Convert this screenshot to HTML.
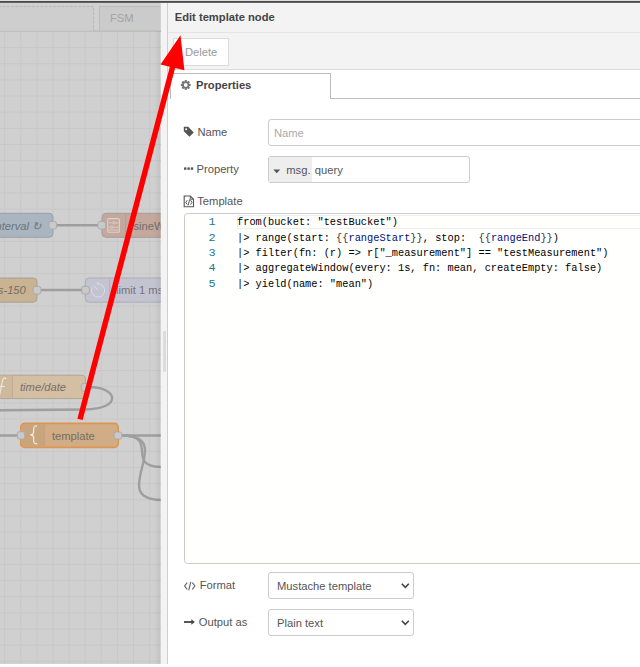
<!DOCTYPE html>
<html><head><meta charset="utf-8">
<style>
html,body{margin:0;padding:0;width:640px;height:667px;overflow:hidden;background:#fff;}
body{position:relative;font-family:"Liberation Sans",sans-serif;font-size:11.2px;}
.a{position:absolute;}
.t{position:absolute;line-height:11.2px;white-space:pre;}
#topline{left:0;top:0;width:640px;height:3px;background:linear-gradient(#e0e0e0 0,#e0e0e0 1px,#444 1px,#4c4c4c 2px,#7a7a7a 3px);}
#strip{left:161px;top:3px;width:6px;height:661px;background:#f3f3f3;}
#stripline{left:167px;top:3px;width:1px;height:661px;background:#cfcfcf;}
#handle{left:163px;top:331px;width:3px;height:41px;background:#dcdcdc;border-radius:1px;}
#panel{left:168px;top:3px;width:472px;height:661px;background:#fff;}
#hdr{left:168px;top:3px;width:472px;height:29px;background:#f3f3f3;border-bottom:1px solid #e4e4e4;}
#tb{left:168px;top:33px;width:472px;height:36px;background:#f3f3f3;border-bottom:1px solid #dddddd;}
.btn{background:#fff;border:1px solid #dcdcdc;box-sizing:border-box;}
.lbl{color:#555;}
.inp{background:#fff;border:1px solid #cccccc;border-radius:3px;box-sizing:border-box;}
.code{font-family:"Liberation Mono",monospace;font-size:11.8px;line-height:15.35px;white-space:pre;color:#000;}
</style></head><body>
<!-- canvas -->
<svg class="a" style="left:0;top:0" width="640" height="667" viewBox="0 0 640 667">
  <defs>
    <clipPath id="cv"><rect x="0" y="3" width="160.6" height="661"/></clipPath>
  </defs>
  <g clip-path="url(#cv)">
    <rect x="0" y="3" width="161" height="661" fill="#d0d0d0"/>
    <g id="grid" stroke="#c8c8c8" stroke-width="1"><line x1="4.60" y1="31" x2="4.60" y2="664"/><line x1="20.72" y1="31" x2="20.72" y2="664"/><line x1="36.84" y1="31" x2="36.84" y2="664"/><line x1="52.96" y1="31" x2="52.96" y2="664"/><line x1="69.08" y1="31" x2="69.08" y2="664"/><line x1="85.20" y1="31" x2="85.20" y2="664"/><line x1="101.32" y1="31" x2="101.32" y2="664"/><line x1="117.44" y1="31" x2="117.44" y2="664"/><line x1="133.56" y1="31" x2="133.56" y2="664"/><line x1="149.68" y1="31" x2="149.68" y2="664"/><line x1="0" y1="47.60" x2="161" y2="47.60"/><line x1="0" y1="63.75" x2="161" y2="63.75"/><line x1="0" y1="79.90" x2="161" y2="79.90"/><line x1="0" y1="96.05" x2="161" y2="96.05"/><line x1="0" y1="112.20" x2="161" y2="112.20"/><line x1="0" y1="128.35" x2="161" y2="128.35"/><line x1="0" y1="144.50" x2="161" y2="144.50"/><line x1="0" y1="160.65" x2="161" y2="160.65"/><line x1="0" y1="176.80" x2="161" y2="176.80"/><line x1="0" y1="192.95" x2="161" y2="192.95"/><line x1="0" y1="209.10" x2="161" y2="209.10"/><line x1="0" y1="225.25" x2="161" y2="225.25"/><line x1="0" y1="241.40" x2="161" y2="241.40"/><line x1="0" y1="257.55" x2="161" y2="257.55"/><line x1="0" y1="273.70" x2="161" y2="273.70"/><line x1="0" y1="289.85" x2="161" y2="289.85"/><line x1="0" y1="306.00" x2="161" y2="306.00"/><line x1="0" y1="322.15" x2="161" y2="322.15"/><line x1="0" y1="338.30" x2="161" y2="338.30"/><line x1="0" y1="354.45" x2="161" y2="354.45"/><line x1="0" y1="370.60" x2="161" y2="370.60"/><line x1="0" y1="386.75" x2="161" y2="386.75"/><line x1="0" y1="402.90" x2="161" y2="402.90"/><line x1="0" y1="419.05" x2="161" y2="419.05"/><line x1="0" y1="435.20" x2="161" y2="435.20"/><line x1="0" y1="451.35" x2="161" y2="451.35"/><line x1="0" y1="467.50" x2="161" y2="467.50"/><line x1="0" y1="483.65" x2="161" y2="483.65"/><line x1="0" y1="499.80" x2="161" y2="499.80"/><line x1="0" y1="515.95" x2="161" y2="515.95"/><line x1="0" y1="532.10" x2="161" y2="532.10"/><line x1="0" y1="548.25" x2="161" y2="548.25"/><line x1="0" y1="564.40" x2="161" y2="564.40"/><line x1="0" y1="580.55" x2="161" y2="580.55"/><line x1="0" y1="596.70" x2="161" y2="596.70"/><line x1="0" y1="612.85" x2="161" y2="612.85"/><line x1="0" y1="629.00" x2="161" y2="629.00"/><line x1="0" y1="645.15" x2="161" y2="645.15"/><line x1="0" y1="661.30" x2="161" y2="661.30"/></g>
    <!-- tab bar -->
    <rect x="0" y="3" width="161" height="28.5" fill="#d0d0d0"/>
    <line x1="0" y1="31" x2="161" y2="31" stroke="#bdbdbd" stroke-width="1"/>
    <rect x="-10" y="6.5" width="104" height="24.5" fill="#cecece"/><path d="M-10 6.5 H93.5 V31" fill="none" stroke="#b9b9b9" stroke-dasharray="3 1.2"/>
    <rect x="99.5" y="6.5" width="100" height="24.5" fill="#cbcbcb" stroke="#bcbcbc"/>
    <text x="110" y="22.3" font-family="Liberation Sans" font-size="11.2" fill="#a4a4a4">FSM</text>
    <line x1="0" y1="31.3" x2="161" y2="31.3" stroke="#bdbdbd" stroke-width="1"/>

    <!-- wires -->
    <g fill="none" stroke="#9e9e9e" stroke-width="2.4">
      <line x1="57" y1="225.3" x2="98" y2="225.3"/>
      <line x1="41" y1="290" x2="82" y2="290"/>
      <path d="M89 387 C 118 387, 123 409, 85 409.5 L -10 410.3"/>
      <line x1="-5" y1="435.5" x2="18" y2="435.5"/>
      <line x1="122" y1="435.5" x2="165" y2="435.5"/>
      <path d="M122 435.5 C 160.2 435.5, 123.8 467, 162 467"/>
      <path d="M122 435.5 C 179 435.5, 105 500, 162 500"/>
    </g>

    <!-- inject node -->
    <rect x="-30" y="213.3" width="83" height="24" rx="4" fill="#a9b5c0" stroke="#9aa1a8" stroke-width="1"/>
    <text x="-7" y="230" font-family="Liberation Sans" font-style="italic" font-size="11.2" fill="#6c747b">interval ↻</text>
    <rect x="48.90" y="221.40" width="7.70" height="7.70" rx="2.2" fill="#c9c9c9" stroke="#a8a8a8" stroke-width="0.9"/>

    <!-- sine node -->
    <rect x="102" y="213.3" width="90" height="24" rx="4" fill="#c2a89d" stroke="#ab9c95" stroke-width="1"/>
    <line x1="125.6" y1="213.5" x2="125.6" y2="237" stroke="#b59f95" stroke-width="1"/>
    <rect x="107.8" y="218.6" width="11.6" height="13.6" rx="1" fill="none" stroke="#ddd2cc" stroke-width="1.1"/>
    <g stroke="#ddd2cc" stroke-width="0.9" fill="none"><path d="M109 222.8 H112.5 M115.5 222.8 H118.5 M109 227.2 H110.2 M113.2 227.2 H118.5 M109 230 H118.5"/><circle cx="114" cy="222.8" r="1.2"/><circle cx="111.7" cy="227.2" r="1.2"/></g>
    <text x="133.5" y="229.8" font-family="Liberation Sans" font-size="11.2" fill="#766c67">sineWave</text>
    <rect x="97.90" y="221.40" width="7.70" height="7.70" rx="2.2" fill="#c9c9c9" stroke="#a8a8a8" stroke-width="0.9"/>

    <!-- s-150 node -->
    <rect x="-40" y="278" width="77" height="24.2" rx="4" fill="#c9b393" stroke="#aaa194" stroke-width="1"/>
    <text x="-11.5" y="294" font-family="Liberation Sans" font-style="italic" font-size="11.2" fill="#746d62">ms-150</text>
    <rect x="33.15" y="286.40" width="7.70" height="7.70" rx="2.2" fill="#c9c9c9" stroke="#a8a8a8" stroke-width="0.9"/>

    <!-- limit node -->
    <rect x="85.25" y="278" width="110" height="24.2" rx="4" fill="#c4c3d0" stroke="#acabb5" stroke-width="1"/>
    <line x1="109.6" y1="278.5" x2="109.6" y2="302" stroke="#b5b3c0" stroke-width="1"/>
    <path d="M98 283.9 A 6.6 6.6 0 1 1 92.3 287.2 M93.6 285.6 L97.9 290.2" fill="none" stroke="#dddce4" stroke-width="1"/>
    <circle cx="97.7" cy="283.3" r="1" fill="#dddce4"/>
    <text x="116" y="294" font-family="Liberation Sans" font-size="11.2" fill="#74737d">limit 1 msg/s</text>
    <rect x="81.65" y="286.40" width="7.70" height="7.70" rx="2.2" fill="#c9c9c9" stroke="#a8a8a8" stroke-width="0.9"/>

    <!-- time/date node -->
    <rect x="-40" y="375.2" width="125.6" height="23.4" rx="4" fill="#d4bfa4" stroke="#aea596" stroke-width="1"/>
    <rect x="-39.5" y="375.7" width="52" height="22.4" fill="#cfb99d"/>
    <line x1="12.5" y1="375.7" x2="12.5" y2="398.1" stroke="#c2ad92" stroke-width="1"/>
    <path d="M6.3 378.8 C 4.8 377.6, 3 378, 2.4 381 L -0.6 396 M -0.8 386.5 H 4.8" fill="none" stroke="#eee6dc" stroke-width="1.2"/>
    <text x="20" y="390.6" font-family="Liberation Sans" font-style="italic" font-size="11.2" fill="#766f65">time/date</text>
    <rect x="81.40" y="383.40" width="7.70" height="7.70" rx="2.2" fill="#c9c9c9" stroke="#a8a8a8" stroke-width="0.9"/>

    <!-- template node -->
    <rect x="20.75" y="423.4" width="97.5" height="24" rx="4" fill="#d0ad86" stroke="#df9550" stroke-width="1.6"/>
    <path d="M44.4 424.2 H24.5 a3.5 3.5 0 0 0 -3 3 V443.6 a3.5 3.5 0 0 0 3 3 H44.4 Z" fill="#c8a57d"/>
    <line x1="44.4" y1="424.3" x2="44.4" y2="446.7" stroke="#bf9c76" stroke-width="1" stroke-dasharray="1.5 1"/>
    <path d="M37.2 425.8 C 34 425.8, 33.6 427, 33.6 429.5 V 432.3 C 33.6 434, 32.8 434.8, 30.2 434.8 C 32.8 434.8, 33.6 435.6, 33.6 437.3 V 440.2 C 33.6 442.6, 34 443.8, 37.2 443.8" fill="none" stroke="#f1e9e0" stroke-width="1.3"/>
    <text x="51.9" y="439.5" font-family="Liberation Sans" font-size="11.2" fill="#776d60">template</text>
    <rect x="17.30" y="431.65" width="7.50" height="7.50" rx="2.2" fill="#c9c9c9" stroke="#a8a8a8" stroke-width="0.9"/>
    <rect x="114.10" y="431.90" width="7.70" height="7.20" rx="2.2" fill="#c9c9c9" stroke="#a8a8a8" stroke-width="0.9"/>
  </g>
</svg>

<div class="a" style="left:154px;top:31px;width:6.6px;height:633px;background:linear-gradient(90deg,rgba(0,0,0,0),rgba(0,0,0,0.07));"></div>
<div class="a" id="topline"></div>
<div class="a" id="strip"></div>
<div class="a" id="handle"></div>
<div class="a" id="stripline"></div>
<div class="a" id="panel"></div>
<div class="a" id="hdr"></div>
<div class="t" style="left:174.7px;top:11.5px;font-weight:bold;color:#444;">Edit template node</div>
<div class="a" id="tb"></div>
<div class="a btn" style="left:173px;top:38px;width:56px;height:27.8px;"></div>
<div class="t" style="left:185px;top:46.5px;color:#999;">Delete</div>

<!-- tabs -->
<div class="a" style="left:170px;top:73px;width:161px;height:26px;border:1px solid #bbb;border-bottom:none;box-sizing:border-box;background:#fff"></div>
<div class="a" style="left:331px;top:98px;width:309px;height:1px;background:#bbb"></div>
<div class="t" style="left:196px;top:79.9px;font-weight:bold;color:#444;">Properties</div>


<!-- gear icon -->
<svg class="a" style="left:180px;top:79.4px" width="12" height="12" viewBox="0 0 12 12">
  <g transform="translate(5.75,6)" fill="#747474">
    <circle r="3.6"/><rect x="-1.1" y="-4.9" width="2.2" height="2.8" transform="rotate(0)"/><rect x="-1.1" y="-4.9" width="2.2" height="2.8" transform="rotate(45)"/><rect x="-1.1" y="-4.9" width="2.2" height="2.8" transform="rotate(90)"/><rect x="-1.1" y="-4.9" width="2.2" height="2.8" transform="rotate(135)"/><rect x="-1.1" y="-4.9" width="2.2" height="2.8" transform="rotate(180)"/><rect x="-1.1" y="-4.9" width="2.2" height="2.8" transform="rotate(225)"/><rect x="-1.1" y="-4.9" width="2.2" height="2.8" transform="rotate(270)"/><rect x="-1.1" y="-4.9" width="2.2" height="2.8" transform="rotate(315)"/>
  </g>
  <circle cx="5.75" cy="6" r="1.9" fill="#fff"/>
</svg>

<!-- Name row -->
<svg class="a" style="left:183px;top:126px" width="12" height="12" viewBox="0 0 12 12">
  <path d="M0.8 0.8 H5.2 L10.8 6.4 L6.4 10.8 L0.8 5.2 Z" fill="#555"/>
  <circle cx="3.2" cy="3.2" r="1" fill="#fff"/>
</svg>
<div class="t lbl" style="left:197.5px;top:127.1px;">Name</div>
<div class="a inp" style="left:268px;top:118.8px;width:400px;height:27px;"></div>
<div class="t" style="left:274px;top:127.8px;color:#aaa;">Name</div>

<!-- Property row -->
<svg class="a" style="left:183px;top:164px" width="12" height="10" viewBox="0 0 12 10">
  <rect x="1" y="3.4" width="2.4" height="2.4" fill="#555"/>
  <rect x="4.4" y="3.4" width="2.4" height="2.4" fill="#555"/>
  <rect x="7.8" y="3.4" width="2.4" height="2.4" fill="#555"/>
</svg>
<div class="t lbl" style="left:196.5px;top:163.5px;">Property</div>
<div class="a inp" style="left:268px;top:156.3px;width:201.5px;height:27px;overflow:hidden;">
  <div class="a" style="left:0;top:0;width:42.6px;height:25px;background:#eeeeee;"></div>
</div>
<svg class="a" style="left:273px;top:168.5px" width="8" height="5" viewBox="0 0 8 5"><path d="M0.3 0.5 H7.2 L3.75 4.2 Z" fill="#555"/></svg>
<div class="t" style="left:286.3px;top:164.5px;color:#555;">msg.</div>
<div class="t" style="left:314.8px;top:164.5px;color:#555;">query</div>

<!-- Template row -->
<svg class="a" style="left:183px;top:195px" width="12" height="13" viewBox="0 0 12 13">
  <path d="M1.2 1 H7.3 L10.5 4.2 V11.8 H1.2 Z" fill="none" stroke="#555" stroke-width="1.1"/>
  <path d="M7.3 1 V4.2 H10.5" fill="none" stroke="#555" stroke-width="1"/>
  <path d="M4.2 5.2 L2.8 7.4 L4.2 9.6 M7.6 5.2 L9 7.4 L7.6 9.6 M6.7 4.4 L5.1 10.4" fill="none" stroke="#555" stroke-width="1"/>
</svg>
<div class="t lbl" style="left:197.25px;top:196.3px;">Template</div>

<!-- code editor -->
<div class="a" style="left:184px;top:213px;width:480px;height:350.5px;border:1px solid #cccccc;border-radius:3.5px;box-sizing:border-box;background:#fffffe;"></div>
<div class="a" style="left:237px;top:214.5px;width:420px;height:14px;border:1px solid #eeeeee;box-sizing:border-box;"></div>
<div class="a code" style="left:185px;top:215.2px;width:30.5px;text-align:right;color:#237893;">1
2
3
4
5</div>
<div class="a code" style="left:236.6px;top:215.2px;transform:scaleX(0.8745);transform-origin:0 0;">from(bucket: "testBucket")
|&gt; range(start: <span style="color:#383838">{{</span><span style="color:#001080">rangeStart</span><span style="color:#383838">}}</span>, stop:  <span style="color:#383838">{{</span><span style="color:#001080">rangeEnd</span><span style="color:#383838">}}</span>)
|&gt; filter(fn: (r) =&gt; r["_measurement"] == "testMeasurement")
|&gt; aggregateWindow(every: 1s, fn: mean, createEmpty: false)
|&gt; yield(name: "mean")</div>

<!-- Format row -->
<svg class="a" style="left:183px;top:580.5px" width="14" height="10" viewBox="0 0 14 10">
  <path d="M4.2 1.6 L1.6 5 L4.2 8.4 M9.3 1.6 L11.9 5 L9.3 8.4 M7.8 0.8 L5.7 9.4" fill="none" stroke="#666" stroke-width="1.15"/>
</svg>
<div class="t lbl" style="left:199.75px;top:579.5px;">Format</div>
<div class="a inp" style="left:268px;top:572px;width:145.9px;height:27.3px;"></div>
<div class="t" style="left:277px;top:580.5px;color:#555;">Mustache template</div>
<svg class="a" style="left:401px;top:583px" width="9" height="6" viewBox="0 0 9 6"><path d="M0.8 0.8 L4.3 4.3 L7.8 0.8" fill="none" stroke="#444" stroke-width="1.6"/></svg>

<!-- Output row -->
<svg class="a" style="left:183px;top:617px" width="13" height="10" viewBox="0 0 13 10">
  <path d="M1 5 H9" stroke="#444" stroke-width="1.8"/>
  <path d="M8.3 2.2 L11.9 5 L8.3 7.8 Z" fill="#444"/>
</svg>
<div class="t lbl" style="left:198.8px;top:616.8px;">Output as</div>
<div class="a inp" style="left:268px;top:609.2px;width:145.9px;height:27.3px;"></div>
<div class="t" style="left:277px;top:617.5px;color:#555;">Plain text</div>
<svg class="a" style="left:401px;top:620px" width="9" height="6" viewBox="0 0 9 6"><path d="M0.8 0.8 L4.3 4.3 L7.8 0.8" fill="none" stroke="#444" stroke-width="1.6"/></svg>

<!-- red arrow -->
<svg class="a" style="left:0;top:0" width="640" height="667" viewBox="0 0 640 667">
  <polygon points="180.5,35.2 160.5,64.5 169.79,66.70 77.34,418.7 82.66,420.1 175.11,68.10 184.4,70.3" fill="#ff0000"/>
</svg>

<!-- End placeholder -->
</body></html>
